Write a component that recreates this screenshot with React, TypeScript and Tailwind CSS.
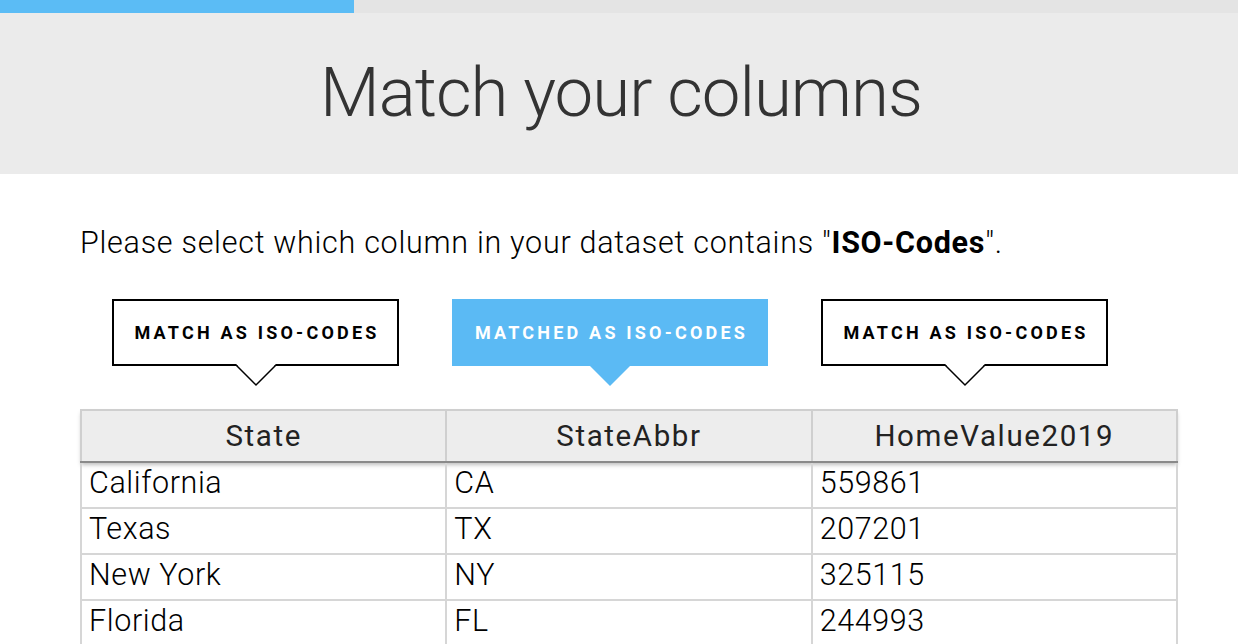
import React from 'react';

type Col = { name: string; matched: boolean; width: string };

const columns: Col[] = [
    { name: 'State', matched: false, width: 'w-[287px]' },
    { name: 'StateAbbr', matched: true, width: 'w-[316px]' },
    { name: 'HomeValue2019', matched: false, width: 'w-[287px]' },
];

const rows = [
    ['California', 'CA', '559861'],
    ['Texas', 'TX', '207201'],
    ['New York', 'NY', '325115'],
    ['Florida', 'FL', '244993'],
];

const MatchButton: React.FC<{ matched: boolean; width: string }> = ({ matched, width }) => {
    if (matched) {
        return (
            <div className={`relative ${width} h-[67px]`}>
                <button className="w-full h-full pl-[3px] bg-[#5bbaf4] text-white font-bold text-[18px] tracking-[3.2px] uppercase">
                    Matched as ISO-Codes
                </button>
                {/* arrow */}
                <div className="absolute left-1/2 -translate-x-1/2 top-full w-0 h-0 border-l-[20px] border-r-[20px] border-t-[20px] border-l-transparent border-r-transparent border-t-[#5bbaf4]" />
            </div>
        );
    }
    return (
        <div className={`relative ${width} h-[67px]`}>
            <button className="w-full h-full pl-[3px] bg-white border-2 border-black text-black font-bold text-[18px] tracking-[3.2px] uppercase">
                Match as ISO-Codes
            </button>
            <svg className="absolute left-1/2 -translate-x-1/2 top-[65px]" width="44" height="23" viewBox="0 0 44 23">
                <polygon points="2,0 22,20 42,0" fill="white" />
                <polyline points="2,1 22,21 42,1" fill="none" stroke="black" strokeWidth="1.5" />
            </svg>
        </div>
    );
};

const App: React.FC = () => {
    return (
        <div className="w-[1238px] h-[644px] overflow-hidden bg-white font-['Roboto',sans-serif]">
            {/* progress */}
            <div className="flex h-[13px] bg-[#e4e4e4]">
                <div className="w-[354px] bg-[#5bbcf5]" />
            </div>

            <div className="h-[161px] bg-[#ebebeb] flex items-center justify-center">
                <h1 className="text-[69px] font-light text-[#333] tracking-[-1px] leading-none pb-[2px] pl-[4px]">Match your columns</h1>
            </div>

            <div className="pl-[80px]">
                <p className="mt-[51px] text-[30.5px] font-light text-black tracking-[0.72px] leading-[36px]">
                    Please select which column in your dataset contains "<b className="font-bold">ISO-Codes</b>".
                </p>

                <div className="flex gap-[53px] ml-[32px] mt-[38px]">
                    {columns.map((c) => (
                        <MatchButton key={c.name} matched={c.matched} width={c.width} />
                    ))}
                </div>

                <table className="mt-[43px] w-[1098px] border-collapse table-fixed">
                    <thead>
                        <tr className="bg-[#ededed] shadow-[0_3px_4px_rgba(0,0,0,0.25)]">
                            {columns.map((c) => (
                                <th
                                    key={c.name}
                                    className="h-[52px] border-2 border-[#cfcfcf] border-b-[#8a8a8a] text-[29.5px] font-normal text-[#222] tracking-[1.6px] text-center"
                                >
                                    {c.name}
                                </th>
                            ))}
                        </tr>
                    </thead>
                    <tbody>
                        {rows.map((r) => (
                            <tr key={r[0]}>
                                {r.map((v, i) => (
                                    <td
                                        key={i}
                                        className="h-[46px] align-top border-2 border-t-0 border-[#d6d6d6] pl-[7px] pt-[5px] text-[30.5px] font-light text-black tracking-[0.6px] leading-none"
                                    >
                                        {v}
                                    </td>
                                ))}
                            </tr>
                        ))}
                    </tbody>
                </table>
            </div>
        </div>
    );
};

export default App;
